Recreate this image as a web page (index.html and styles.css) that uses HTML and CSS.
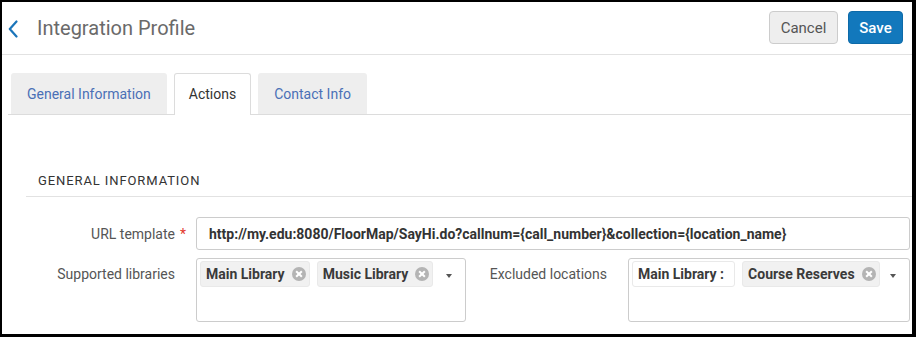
FILE: index.html
```html
<!DOCTYPE html>
<html lang="en">
<head>
    <meta charset="UTF-8">
    <meta name="viewport" content="width=device-width, initial-scale=1.0">
    <title>Integration Profile</title>
    <link rel="stylesheet" href="styles.css">
</head>
<body>
    <div class="page">
        <header class="page-header">
            <a class="back-link" href="#">
                <svg width="10" height="18" viewBox="0 0 10 18">
                    <path d="M8.5 1.5 L1.8 9 L8.5 16.5" fill="none" stroke="#1b75ba" stroke-width="2.2" stroke-linecap="round" stroke-linejoin="round"/>
                </svg>
            </a>
            <h1>Integration Profile</h1>
            <div class="header-actions">
                <button class="btn btn-cancel">Cancel</button>
                <button class="btn btn-save">Save</button>
            </div>
        </header>

        <nav class="tabs">
            <a class="tab" href="#">General Information</a>
            <a class="tab active" href="#">Actions</a>
            <a class="tab" href="#">Contact Info</a>
        </nav>

        <section class="section">
            <h2 class="section-title">General Information</h2>

            <div class="form">
                <div class="form-row">
                    <label class="field-label wide">URL template<span class="req">*</span></label>
                    <div class="text-input">http://my.edu:8080/FloorMap/SayHi.do?callnum={call_number}&amp;collection={location_name}</div>
                </div>

                <div class="form-row">
                    <label class="field-label wide">Supported libraries<span class="req"></span></label>
                    <div class="multi-select small">
                        <div class="chips">
                            <span class="chip">Main Library <span class="chip-remove"></span></span>
                            <span class="chip">Music Library <span class="chip-remove"></span></span>
                        </div>
                        <span class="caret"></span>
                    </div>

                    <label class="field-label narrow">Excluded locations<span class="req"></span></label>
                    <div class="multi-select grow">
                        <div class="chips">
                            <span class="chip chip-plain">Main Library :</span>
                            <span class="chip">Course Reserves <span class="chip-remove"></span></span>
                        </div>
                        <span class="caret"></span>
                    </div>
                </div>
            </div>
        </section>
    </div>
</body>
</html>
```

FILE: styles.css
```css
* {
    margin: 0;
    padding: 0;
    box-sizing: border-box;
}

html, body {
    height: 100%;
}

body {
    font-family: Roboto, 'Liberation Sans', Arial, sans-serif;
    background: #000;
    padding: 2px 4px 3px 2px;
    overflow: hidden;
}

.page {
    background: #fff;
    height: 100%;
    overflow: hidden;
}

/* header */
.page-header {
    display: flex;
    align-items: center;
    height: 53px;
    padding: 0 9px 0 6px;
    border-bottom: 1px solid #e2e2e2;
}

.back-link {
    display: flex;
    width: 10px;
    height: 18px;
    margin-top: 1px;
}

.page-header h1 {
    font-size: 20px;
    font-weight: 400;
    color: #6a6a6a;
    margin-left: 19px;
    flex: 1;
}

.header-actions {
    display: flex;
    gap: 10px;
    margin-top: -1px;
}

.btn {
    font-family: inherit;
    font-size: 15px;
    height: 33px;
    border-radius: 4px;
    cursor: pointer;
}

.btn-cancel {
    width: 69px;
    background: #eeeeee;
    border: 1px solid #cccccc;
    color: #555;
}

.btn-save {
    width: 55px;
    background: #1278bc;
    border: 1px solid #0d6aa8;
    color: #fff;
    font-weight: 500;
}

/* tabs */
.tabs {
    display: flex;
    gap: 7px;
    margin: 18px 1px 0 6px;
    padding-left: 3px;
    height: 42px;
    border-bottom: 1px solid #dcdcdc;
}

.tab {
    display: flex;
    align-items: center;
    height: 41px;
    padding: 0 16px;
    background: #eeeeee;
    border-radius: 3px 3px 0 0;
    font-size: 14px;
    color: #4a70b6;
    text-decoration: none;
}

.tab.active {
    background: #fff;
    color: #333;
    height: 42px;
    border: 1px solid #dcdcdc;
    border-bottom: none;
    padding: 0 14px 1px;
}

/* section */
.section {
    margin: 58px 0 0 24px;
}

.section-title {
    font-size: 13px;
    font-weight: 400;
    text-transform: uppercase;
    letter-spacing: 0.9px;
    color: #333;
    line-height: 16px;
    padding: 0 0 7px 12px;
    border-bottom: 1px solid #e2e2e2;
}

.form {
    padding: 20px 2px 0 0;
    display: flex;
    flex-direction: column;
    gap: 8px;
}

.form-row {
    display: flex;
    align-items: flex-start;
}

.field-label {
    display: flex;
    justify-content: flex-end;
    font-size: 14px;
    color: #555;
    line-height: 16px;
    padding-top: 8px;
    margin-right: 10px;
}

.field-label.wide {
    width: 160px;
}

.field-label.narrow {
    width: 152px;
}

.req {
    width: 11px;
    text-align: right;
    color: #e2372c;
}

.text-input {
    flex: 1;
    height: 33px;
    border: 1px solid #cccccc;
    border-radius: 3px;
    padding: 0 12px;
    display: flex;
    align-items: center;
    font-size: 14px;
    font-weight: 700;
    color: #333;
    white-space: nowrap;
    overflow: hidden;
}

.form-row:first-child .field-label {
    padding-top: 9px;
}

.multi-select {
    display: flex;
    height: 64px;
    border: 1px solid #cccccc;
    border-radius: 3px;
    padding: 2px 0 0 3px;
}

.multi-select.small {
    width: 270px;
}

.multi-select.grow {
    flex: 1;
}

.chips {
    flex: 1;
    display: flex;
    flex-wrap: wrap;
    align-content: flex-start;
    gap: 4px 7px;
}

.chip {
    display: inline-flex;
    align-items: center;
    gap: 7px;
    height: 26px;
    padding: 0 3px 0 5px;
    background: #f1f1f1;
    border: 1px solid #e9e9e9;
    border-radius: 3px;
    font-size: 14px;
    font-weight: 700;
    color: #3a3a3a;
    white-space: nowrap;
}

.chip-plain {
    background: #fff;
    padding-right: 10px;
}

.chip-remove {
    position: relative;
    width: 14px;
    height: 14px;
    border-radius: 50%;
    background: #b4b4b4;
}

.chip-remove:before,
.chip-remove:after {
    content: "";
    position: absolute;
    left: 3px;
    top: 6px;
    width: 8px;
    height: 2px;
    background: #fff;
    transform: rotate(45deg);
}

.chip-remove:after {
    transform: rotate(-45deg);
}

.caret {
    flex: none;
    width: 0;
    height: 0;
    margin: 13px 13px 0 4px;
    border-left: 3.5px solid transparent;
    border-right: 3.5px solid transparent;
    border-top: 4px solid #555;
}
```
